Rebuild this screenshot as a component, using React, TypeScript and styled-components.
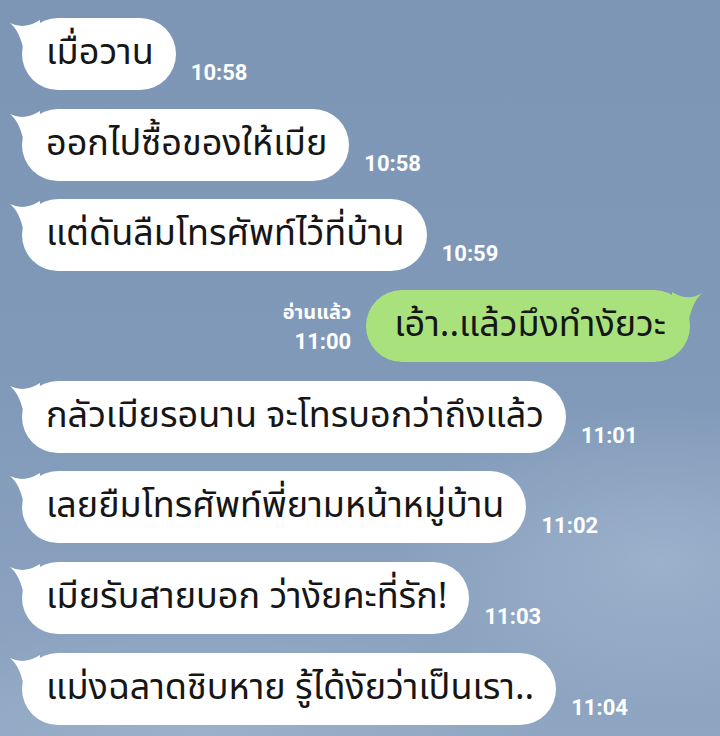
import React from "react";
import styled, { createGlobalStyle } from "styled-components";

const Global = createGlobalStyle`
  html, body { margin: 0; padding: 0; }
  body {
    width: 720px;
    height: 736px;
    overflow: hidden;
    background: #7f98b8;
  }
`;

const Screen = styled.div`
  width: 720px;
  height: 736px;
  box-sizing: border-box;
  padding: 18px 0 0 0;
  display: flex;
  flex-direction: column;
  gap: 18.7px;
  background:
    radial-gradient(ellipse 380px 220px at 660px 560px, rgba(180, 197, 218, 0.45), rgba(180, 197, 218, 0) 70%),
    radial-gradient(ellipse 500px 180px at 200px 736px, rgba(170, 188, 211, 0.45), rgba(170, 188, 211, 0) 70%),
    linear-gradient(180deg, #7d96b6 0%, #8099b9 50%, #8fa6c2 100%);
  font-family: "Noto Sans Thai", "Loma", "Garuda", "Noto Sans", "DejaVu Sans", sans-serif;
`;

const Row = styled.div<{ $mine?: boolean }>`
  display: flex;
  flex-direction: ${(p) => (p.$mine ? "row-reverse" : "row")};
  align-items: flex-end;
  padding: ${(p) => (p.$mine ? "0 30px 0 0" : "0 0 0 22px")};
`;

const Bubble = styled.div<{ $mine?: boolean }>`
  position: relative;
  height: 72px;
  box-sizing: border-box;
  display: flex;
  align-items: center;
  padding: 0 ${(p) => (p.$mine ? "24px" : "22px")} 2px ${(p) => (p.$mine ? "28px" : "24px")};
  border-radius: 36px;
  background: ${(p) => (p.$mine ? "#a9e27d" : "#ffffff")};
  color: #161616;
  font-size: 36px;
  white-space: nowrap;
`;

const TailLeft = styled.svg`
  position: absolute;
  left: -12px;
  top: 0;
  width: 36px;
  height: 36px;
`;

const TailRight = styled.svg`
  position: absolute;
  right: -12px;
  top: 0;
  width: 36px;
  height: 36px;
`;

const Meta = styled.div<{ $mine?: boolean }>`
  display: flex;
  flex-direction: column;
  gap: 6px;
  align-items: ${(p) => (p.$mine ? "flex-end" : "flex-start")};
  margin: ${(p) => (p.$mine ? "0 15px 8px 0" : "0 0 5px 15px")};
  color: #ffffff;
  font-family: Roboto, "Liberation Sans", sans-serif;
  font-weight: 700;
`;

const Read = styled.span`
  font-family: "Noto Sans Thai", "Loma", "Garuda", "Noto Sans", sans-serif;
  font-size: 20px;
  line-height: 22px;
  font-weight: 700;
`;

const Time = styled.span`
  font-size: 22px;
  line-height: 24px;
`;

type Msg = { text: string; time: string; mine?: boolean };

const messages: Msg[] = [
  { text: "เมื่อวาน", time: "10:58" },
  { text: "ออกไปซื้อของให้เมีย", time: "10:58" },
  { text: "แต่ดันลืมโทรศัพท์ไว้ที่บ้าน", time: "10:59" },
  { text: "เอ้า..แล้วมึงทำงัยวะ", time: "11:00", mine: true },
  { text: "กลัวเมียรอนาน จะโทรบอกว่าถึงแล้ว", time: "11:01" },
  { text: "เลยยืมโทรศัพท์พี่ยามหน้าหมู่บ้าน", time: "11:02" },
  { text: "เมียรับสายบอก ว่างัยคะที่รัก!", time: "11:03" },
  { text: "แม่งฉลาดชิบหาย รู้ได้งัยว่าเป็นเรา..", time: "11:04" },
];

export default function App() {
  return (
    <>
      <Global />
      <Screen>
        {messages.map((m, i) => (
          <Row key={i} $mine={m.mine}>
            <Bubble $mine={m.mine}>
              {m.mine ? (
                <TailRight viewBox="0 0 36 36">
                  <path d="M36 3 Q22 12 6 2 L6 34 L22 34 Q26 12 36 3 Z" fill="#a9e27d" />
                </TailRight>
              ) : (
                <TailLeft viewBox="0 0 36 36">
                  <path d="M0 5 Q14 12 30 2 L30 34 L14 34 Q10 13 0 5 Z" fill="#ffffff" />
                </TailLeft>
              )}
              {m.text}
            </Bubble>
            <Meta $mine={m.mine}>
              {m.mine && <Read>อ่านแล้ว</Read>}
              <Time>{m.time}</Time>
            </Meta>
          </Row>
        ))}
      </Screen>
    </>
  );
}
